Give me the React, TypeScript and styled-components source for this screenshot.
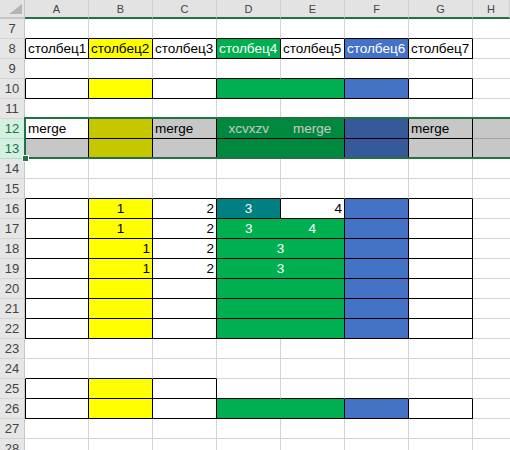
import React from 'react';
import styled, { createGlobalStyle } from 'styled-components';

const GRIDLINE = '#d4d4d4';
const BLACK = '#000000';
const YELLOW = '#ffff00';
const GREEN = '#00b050';
const BLUE = '#4472c4';
const TEAL = '#008080';
const EXCEL_GREEN = '#217346';

const COLUMNS = ['A', 'B', 'C', 'D', 'E', 'F', 'G'];
const FIRST_ROW = 7;
const LAST_ROW = 28;
const SELECTED = [12, 13];
const ACTIVE = { row: 12, col: 0 };

type Align = 'left' | 'center' | 'right';
type Part = { text: string; align: Align };
type CellDef = {
  span: number;
  fill?: string;
  color?: string;
  boxed?: boolean;
  parts?: Part[];
};

const t = (text: string, align: Align = 'left'): Part => ({ text, align });

const b = (fill?: string, parts?: Part[], span = 1, color?: string): CellDef => ({
  boxed: true,
  fill,
  parts,
  span,
  color,
});

const plainRow = (): CellDef[] => [b(), b(YELLOW), b(), b(GREEN, undefined, 2), b(BLUE), b()];

const numberRow = (one: Align): CellDef[] => [
  b(),
  b(YELLOW, [t('1', one)]),
  b(undefined, [t('2', 'right')]),
  b(GREEN, [t('3', 'center')], 2, '#fff'),
  b(BLUE),
  b(),
];

const DATA: Record<number, CellDef[]> = {
  8: [
    b(undefined, [t('столбец1')]),
    b(YELLOW, [t('столбец2')]),
    b(undefined, [t('столбец3')]),
    b(GREEN, [t('столбец4')], 1, '#fff'),
    b(undefined, [t('столбец5')]),
    b(BLUE, [t('столбец6')], 1, '#fff'),
    b(undefined, [t('столбец7')]),
  ],
  10: plainRow(),
  12: [
    b(undefined, [t('merge')]),
    b(YELLOW),
    b(undefined, [t('merge')]),
    b(GREEN, [t('xcvxzv', 'center'), t('merge', 'center')], 2, '#fff'),
    b(BLUE),
    b(undefined, [t('merge')]),
  ],
  13: plainRow(),
  16: [
    b(),
    b(YELLOW, [t('1', 'center')]),
    b(undefined, [t('2', 'right')]),
    b(TEAL, [t('3', 'center')], 1, '#fff'),
    b(undefined, [t('4', 'right')]),
    b(BLUE),
    b(),
  ],
  17: [
    b(),
    b(YELLOW, [t('1', 'center')]),
    b(undefined, [t('2', 'right')]),
    b(GREEN, [t('3', 'center'), t('4', 'center')], 2, '#fff'),
    b(BLUE),
    b(),
  ],
  18: numberRow('right'),
  19: numberRow('right'),
  20: plainRow(),
  21: plainRow(),
  22: plainRow(),
  25: [b(), b(YELLOW), b()],
  26: plainRow(),
};

// pad every row to seven columns
const rowCells = (row: number): CellDef[] => {
  const cells = [...(DATA[row] ?? [])];
  let used = cells.reduce((n, c) => n + c.span, 0);
  while (used < COLUMNS.length) {
    cells.push({ span: 1 });
    used += 1;
  }
  return cells;
};

const boxedAt = (row: number, col: number) => {
  let start = 0;
  for (const cell of rowCells(row)) {
    if (col >= start && col < start + cell.span) return !!cell.boxed;
    start += cell.span;
  }
  return false;
};

const GlobalStyle = createGlobalStyle`
  html, body {
    margin: 0;
    padding: 0;
    background: #ffffff;
    overflow: hidden;
  }
`;

const Sheet = styled.div`
  position: relative;
  display: grid;
  grid-template-columns: 25px repeat(7, 64px) 1fr;
  grid-template-rows: 19px;
  grid-auto-rows: 20px;
  width: 510px;
  height: 450px;
  overflow: hidden;
  font-family: 'Liberation Sans', Arial, sans-serif;
  color: #000;
`;

const Corner = styled.div`
  display: flex;
  align-items: flex-end;
  justify-content: flex-end;
  padding: 0 2px 3px 0;
  background: #e3e3e3;
  border-right: 1px solid #c6c6c6;
  border-bottom: 2px solid #c6c6c6;
`;

const ColHead = styled.div`
  display: flex;
  align-items: center;
  justify-content: center;
  background: #e3e3e3;
  border-right: 1px solid #cfcfcf;
  border-bottom: 2px solid ${EXCEL_GREEN};
  color: #444;
  font-size: 11px;
  padding-top: 1px;
`;

const RowHead = styled.div<{ $active: boolean }>`
  display: flex;
  align-items: center;
  justify-content: center;
  background: ${(p) => (p.$active ? '#d3f0e0' : '#e6e6e6')};
  color: ${(p) => (p.$active ? EXCEL_GREEN : '#444')};
  border-right: 1px solid #c6c6c6;
  border-bottom: 1px solid ${(p) => (p.$active ? '#b9dcc7' : '#d5d5d5')};
  font-size: 13px;
`;

const Cell = styled.div<{
  $span: number;
  $fill?: string;
  $color?: string;
  $right: string;
  $bottom: string;
  $left?: string;
  $selected: boolean;
}>`
  position: relative;
  grid-column: span ${(p) => p.$span};
  display: grid;
  grid-template-columns: repeat(${(p) => p.$span}, 1fr);
  background: ${(p) => p.$fill ?? '#ffffff'};
  color: ${(p) => p.$color ?? '#000'};
  border-right: 1px solid ${(p) => p.$right};
  border-bottom: 1px solid ${(p) => p.$bottom};
  border-left: ${(p) => (p.$left ? `1px solid ${p.$left}` : 'none')};
  font-size: 13.5px;

  &::after {
    content: '';
    display: ${(p) => (p.$selected ? 'block' : 'none')};
    position: absolute;
    inset: 0 -1px -1px 0;
    background: rgba(0, 0, 0, 0.22);
  }
`;

const Filler = styled.div<{ $selected: boolean }>`
  position: relative;
  border-bottom: 1px solid ${GRIDLINE};
  background: #ffffff;

  &::after {
    content: '';
    display: ${(p) => (p.$selected ? 'block' : 'none')};
    position: absolute;
    inset: 0 0 -1px 0;
    background: rgba(0, 0, 0, 0.22);
  }
`;

const Value = styled.span<{ $align: Align; $whole: boolean }>`
  grid-column: ${(p) => (p.$whole ? '1 / -1' : 'auto')};
  display: flex;
  align-items: flex-end;
  justify-content: ${(p) =>
    p.$align === 'left' ? 'flex-start' : p.$align === 'right' ? 'flex-end' : 'center'};
  padding: 0 2px 1px;
  line-height: 16px;
  white-space: nowrap;
`;

const Selection = styled.div`
  position: absolute;
  grid-row: ${SELECTED[0] - FIRST_ROW + 2} / ${SELECTED[1] - FIRST_ROW + 3};
  grid-column: 2 / -1;
  top: -2px;
  left: -1px;
  right: -10px;
  bottom: 0;
  border: 2px solid ${EXCEL_GREEN};
  pointer-events: none;
  z-index: 2;
`;

const FillHandle = styled.div`
  position: absolute;
  left: -4px;
  bottom: -5px;
  width: 5px;
  height: 5px;
  background: ${EXCEL_GREEN};
  border: 1px solid #ffffff;
`;

const CornerMark = () => (
  <svg width="13" height="10" viewBox="0 0 13 10">
    <polygon points="13,0 13,10 0,10" fill="#b4b4b4" />
  </svg>
);

const SheetRow: React.FC<{ row: number }> = ({ row }) => {
  const cells = rowCells(row);
  const selected = SELECTED.includes(row);
  let start = 0;

  return (
    <>
      <RowHead $active={selected}>{row}</RowHead>
      {cells.map((cell, i) => {
        const col = start;
        start += cell.span;
        const next = cells[i + 1];
        const right = cell.boxed || next?.boxed ? BLACK : cell.fill ? 'transparent' : GRIDLINE;
        const below = row < LAST_ROW && boxedAt(row + 1, col);
        const bottom = cell.boxed || below ? BLACK : cell.fill ? 'transparent' : GRIDLINE;
        const left = col === 0 ? (cell.boxed ? BLACK : 'transparent') : undefined;
        const isActive = row === ACTIVE.row && col === ACTIVE.col;
        const parts = cell.parts ?? [];
        return (
          <Cell
            key={col}
            $span={cell.span}
            $fill={cell.fill}
            $color={cell.color}
            $right={right}
            $bottom={bottom}
            $left={left}
            $selected={selected && !isActive}
          >
            {parts.map((p, j) => (
              <Value key={j} $align={p.align} $whole={parts.length !== cell.span}>
                {p.text}
              </Value>
            ))}
          </Cell>
        );
      })}
      <Filler $selected={selected} />
    </>
  );
};

export default function App() {
  const rows: number[] = [];
  for (let r = FIRST_ROW; r <= LAST_ROW; r++) rows.push(r);

  return (
    <>
      <GlobalStyle />
      <Sheet>
        <Corner>
          <CornerMark />
        </Corner>
        {COLUMNS.map((c) => (
          <ColHead key={c}>{c}</ColHead>
        ))}
        <ColHead>H</ColHead>
        {rows.map((r) => (
          <SheetRow key={r} row={r} />
        ))}
        <Selection>
          <FillHandle />
        </Selection>
      </Sheet>
    </>
  );
}
